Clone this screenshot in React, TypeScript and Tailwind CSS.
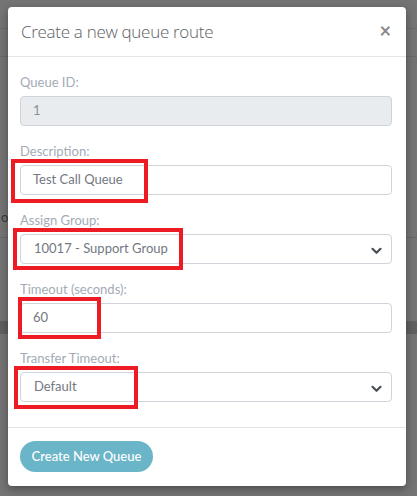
import React from "react";

const Chevron = () => (
  <svg width="11" height="8" viewBox="0 0 11 8" className="absolute right-[9px] top-[12px]">
    <path d="M1.5 1.8 L5.5 5.8 L9.5 1.8" fill="none" stroke="#4a4f55" strokeWidth="2.2" strokeLinecap="round" strokeLinejoin="round" />
  </svg>
);

function Field({
  label,
  children,
  mark,
}: {
  label: string;
  children: React.ReactNode;
  mark?: string;
}) {
  return (
    <div className="flex flex-col">
      <label className="h-[19px] mb-[4px] text-[13px] leading-[19px] text-[#a4abb6]">{label}</label>
      <div className="relative">
        {children}
        {mark && <div className={`absolute border-[4px] border-[#ed1c24] ${mark}`} />}
      </div>
    </div>
  );
}

export default function App() {
  return (
    <div
      className="relative w-[417px] h-[496px] overflow-hidden bg-[#747474]"
      style={{ fontFamily: "Lato, 'Open Sans', sans-serif" }}
    >
      <div className="absolute inset-0 flex flex-col">
        <div className="h-[28px]" />
        <div className="h-[1px] bg-[#6a6a6a]" />
        <div className="h-[27px]" />
        <div className="h-[1px] bg-[#6a6a6a]" />
        <div className="h-[150px]" />
        <div className="h-[20px] text-[13px] leading-[20px] text-[#3a3a3a] pl-[1px]">or</div>
        <div className="h-[10px]" />
        <div className="h-[1px] bg-[#676767]" />
        <div className="h-[83px]" />
        <div className="h-[13px] bg-[#5f5f5f]" />
      </div>

      <div className="relative pt-[7px] pl-[8px]">
        <div className="w-[398px] h-[479px] bg-white rounded-[4px] shadow-[0_3px_8px_rgba(0,0,0,0.35)] flex flex-col">
          <div className="h-[50px] flex items-center justify-between pl-[13px] pr-[15px] border-b border-[#e5e5e5]">
            <span className="text-[17px] text-[#5b5e63] font-light tracking-[-0.3px]" style={{ fontFamily: "'Open Sans', Lato, sans-serif" }}>
              Create a new queue route
            </span>
            <span className="text-[20px] leading-none font-bold text-[#8a8a8a] -mt-[4px]">×</span>
          </div>

          <div className="flex flex-col gap-[16px] pl-[12px] pr-[14px] pt-[16px] pb-[25px]">
            <Field label="Queue ID:">
              <div className="h-[30px] rounded-[4px] border border-[#ced4da] bg-[#e9ecef] flex items-center pl-[12px] text-[13px] text-[#8a9199]">
                1
              </div>
            </Field>
            <Field label="Description:" mark="-left-[9px] -top-[6px] w-[137px] h-[44px]">
              <div className="h-[30px] rounded-[4px] border border-[#ced4da] bg-white flex items-center pl-[12px] text-[13px] text-[#73787f]">
                Test Call Queue
              </div>
            </Field>
            <Field label="Assign Group:" mark="-left-[7px] -top-[6px] w-[170px] h-[42px]">
              <div className="relative h-[30px] rounded-[4px] border border-[#ced4da] bg-white flex items-center pl-[13px] text-[13px] text-[#73787f]">
                10017 - Support Group
                <Chevron />
              </div>
            </Field>
            <Field label="Timeout (seconds):" mark="-left-[2px] -top-[6px] w-[83px] h-[42px]">
              <div className="h-[30px] rounded-[4px] border border-[#ced4da] bg-white flex items-center pl-[12px] text-[13px] text-[#73787f]">
                60
              </div>
            </Field>
            <Field label="Transfer Timeout:" mark="-left-[6px] -top-[6px] w-[124px] h-[43px]">
              <div className="relative h-[30px] rounded-[4px] border border-[#ced4da] bg-white flex items-center pl-[13px] text-[13px] text-[#73787f]">
                Default
                <Chevron />
              </div>
            </Field>
          </div>

          <div className="border-t border-[#e5e5e5] pl-[12px] pt-[13px]">
            <button className="h-[31px] w-[133px] rounded-full bg-[#6bb5c9] text-white text-[13px] font-medium flex items-center justify-center">
              Create New Queue
            </button>
          </div>
        </div>
      </div>
    </div>
  );
}
